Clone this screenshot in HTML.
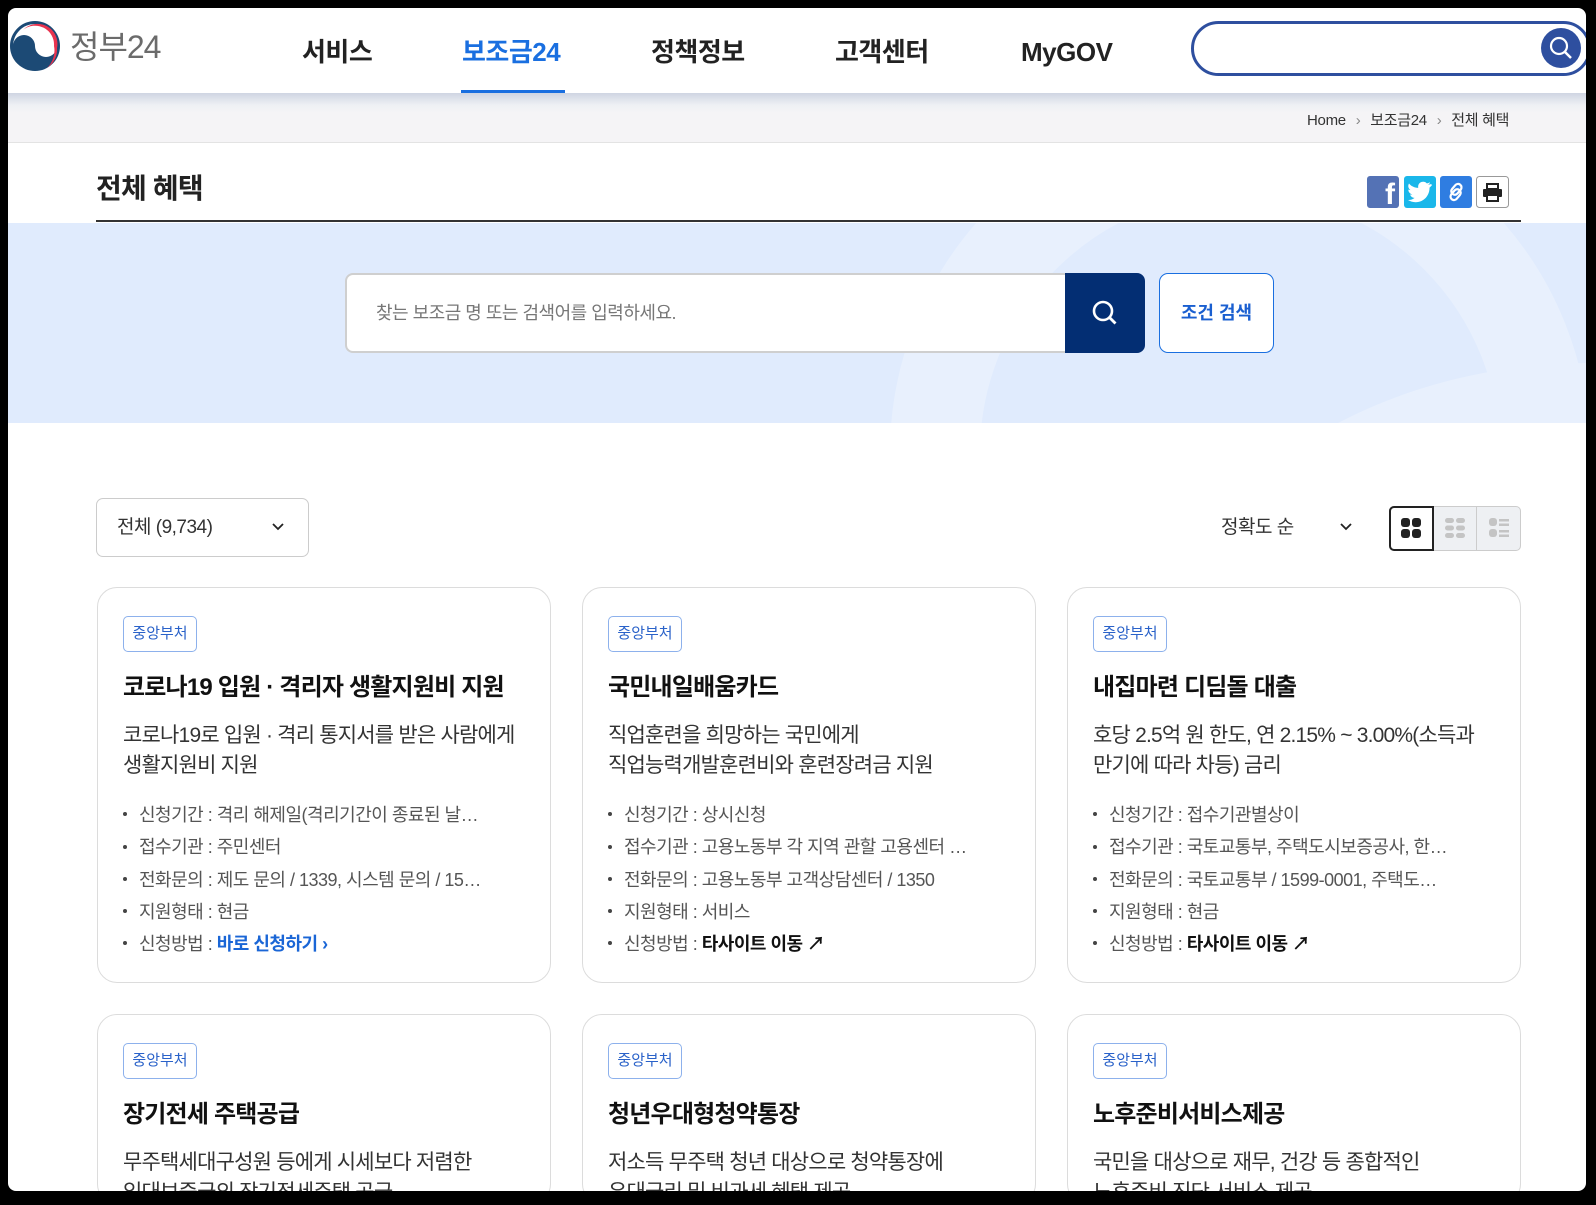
<!DOCTYPE html>
<html><head><meta charset="utf-8"><style>
*{margin:0;padding:0;box-sizing:border-box}
html,body{width:1596px;height:1205px;background:#000;overflow:hidden}
body{font-family:"Liberation Sans","Noto Sans CJK KR",sans-serif;position:relative}
#win{position:absolute;left:0;top:0;width:1596px;height:1205px;background:#fff;clip-path:inset(8px 10px 14px 8px round 8px);overflow:hidden}
.a{position:absolute;white-space:nowrap}
.nav{font-size:26px;font-weight:bold;color:#222;top:34px;line-height:36px;letter-spacing:-0.5px}
.card{position:absolute;width:454px;height:396px;border:1px solid #dcdcdc;border-radius:20px;background:#fff;overflow:hidden}
.tag{position:absolute;left:25px;top:28px;width:74px;height:36px;border:1px solid #8db1ec;border-radius:5px;color:#2a62c9;font-size:15px;line-height:34px;text-align:center}
.tt{position:absolute;left:25px;top:82px;font-size:24px;font-weight:bold;color:#111;line-height:36px;white-space:nowrap;letter-spacing:-0.8px}
.ds{position:absolute;left:25px;top:133px;font-size:21px;color:#333;line-height:30px;white-space:nowrap;letter-spacing:-0.8px}
.ul{position:absolute;left:25px;top:211px;list-style:none;font-size:18px;color:#555;line-height:32.3px;white-space:nowrap;letter-spacing:-0.5px}
.ul li:before{content:"";display:inline-block;width:4px;height:4px;background:#444;border-radius:50%;margin:0 12px 4px 0;vertical-align:middle}
.blk{color:#111;font-weight:bold}
.blu{color:#1a66d6;font-weight:bold}
</style></head><body><div id="win">
<svg class="a" style="left:9px;top:20px" width="52" height="52" viewBox="0 0 52 52">
<circle cx="26" cy="26" r="25" fill="#1c4a75"/>
<path d="M4 26 A22 22 0 0 1 48 26 A11 11 0 0 1 26 26 A11 11 0 0 0 4 26Z" fill="#fff"/>
<path d="M14 10 A20 20 0 0 1 48 28 A22 22 0 0 1 38 48 A24 24 0 0 0 45 26 A19 19 0 0 0 14 10Z" fill="#e8334f"/>
</svg>
<div class="a" style="left:70px;top:27px;font-size:32px;color:#6b6b6b;line-height:40px;letter-spacing:-1px">정부24</div>
<div class="a nav" style="left:302px">서비스</div>
<div class="a nav" style="left:462px;color:#1a6fe0">보조금24</div>
<div class="a" style="left:461px;top:90px;width:104px;height:6px;background:#1a6fe0"></div>
<div class="a nav" style="left:651px">정책정보</div>
<div class="a nav" style="left:835px">고객센터</div>
<div class="a nav" style="left:1021px">MyGOV</div>
<div class="a" style="left:1191px;top:21px;width:400px;height:55px;border:3px solid #2e4f9f;border-radius:28px"></div>
<svg class="a" style="left:1541px;top:28px" width="40" height="40"><circle cx="20" cy="20" r="20" fill="#2e4f9f"/><circle cx="18" cy="18" r="8" fill="none" stroke="#fff" stroke-width="2.2"/><path d="M24 24l6 6" stroke="#fff" stroke-width="2.5"/></svg>
<div class="a" style="left:0;top:93px;width:1596px;height:50px;background:linear-gradient(#cfd5e2,#eef0f4 12px,#f5f4f6 20px);border-bottom:1px solid #e3e3e3"></div>
<div class="a" style="left:1307px;top:111px;font-size:15px;color:#333;line-height:20px;letter-spacing:-0.3px">Home <span style="color:#888;margin:0 6px">›</span> 보조금24 <span style="color:#888;margin:0 6px">›</span> 전체 혜택</div>
<div class="a" style="left:96px;top:170px;font-size:28px;font-weight:bold;color:#222;line-height:38px;letter-spacing:-0.8px">전체 혜택</div>
<div class="a" style="left:96px;top:220px;width:1425px;height:2px;background:#333"></div>
<div class="a" style="left:1367px;top:176px;width:32px;height:32px;background:#5472b5;border-radius:3px;color:#fff;font-weight:bold;font-size:30px;line-height:38px;text-align:right;padding-right:4px;overflow:hidden">f</div>
<svg class="a" style="left:1404px;top:176px" width="32" height="32"><rect width="32" height="32" rx="3" fill="#1ab7ea"/><path d="M26 10c-1 .5-2 .7-3 .8 1-.6 1.800-1.500 2-2.600-1 .6-2 1-3.200 1.200a5 5 0 0 0-8.600 4.500C9.200 13.700 6 12 4 9.500c-1.500 2.500-.5 5.200 1.500 6.600-.8 0-1.600-.3-2.200-.6 0 2.400 1.700 4.400 4 4.900-.7.200-1.500.2-2.200.1.600 2 2.500 3.400 4.600 3.400A10 10 0 0 1 3 26c2.200 1.400 4.800 2.200 7.500 2.200 9 0 14-7.500 14-14v-.6c1-.7 1.800-1.600 2.500-2.600z" fill="#fff" transform="translate(1 -2)"/></svg>
<svg class="a" style="left:1440px;top:176px" width="32" height="32"><rect width="32" height="32" rx="3" fill="#2f7de1"/><g fill="none" stroke="#fff" stroke-width="2.2"><rect x="13" y="7" width="7" height="12" rx="3.5" transform="rotate(40 16 13)"/><rect x="12" y="13" width="7" height="12" rx="3.5" transform="rotate(40 16 19)"/></g></svg>
<svg class="a" style="left:1476px;top:176px" width="33" height="32"><rect x=".5" y=".5" width="32" height="31" rx="3" fill="#fff" stroke="#999"/><rect x="11" y="8" width="11" height="5" fill="none" stroke="#222" stroke-width="2"/><rect x="7" y="13" width="19" height="8" rx="1" fill="#222"/><rect x="11" y="19" width="11" height="6" fill="#fff" stroke="#222" stroke-width="2"/></svg>
<div class="a" style="left:0;top:223px;width:1596px;height:200px;background:#e0ebfd;overflow:hidden">
<div class="a" style="left:890px;top:-120px;width:700px;height:700px;border-radius:50%;border:90px solid #e8f0fd"></div>
<div class="a" style="left:1140px;top:140px;width:900px;height:700px;border-radius:50%;border:80px solid #e8f0fd"></div>
</div>
<div class="a" style="left:345px;top:273px;width:722px;height:80px;background:#fff;border:2px solid #cfcfcf;border-right:none;border-radius:8px 0 0 8px"></div>
<div class="a" style="left:376px;top:301px;font-size:18px;color:#777;line-height:24px;letter-spacing:-0.5px">찾는 보조금 명 또는 검색어를 입력하세요.</div>
<div class="a" style="left:1065px;top:273px;width:80px;height:80px;background:#032e73;border-radius:0 8px 8px 0"></div>
<svg class="a" style="left:1090px;top:298px" width="30" height="30"><circle cx="13" cy="13" r="9" fill="none" stroke="#fff" stroke-width="2.6"/><path d="M19.500 19.500l6 6" stroke="#fff" stroke-width="2.8"/></svg>
<div class="a" style="left:1159px;top:273px;width:115px;height:80px;background:#fff;border:1px solid #1a6fe0;border-radius:9px;color:#1a5fd0;font-weight:bold;font-size:18px;line-height:78px;text-align:center">조건 검색</div>
<div class="a" style="left:96px;top:498px;width:213px;height:59px;border:1px solid #ccc;border-radius:7px"></div>
<div class="a" style="left:117px;top:516px;font-size:19px;color:#333;line-height:24px;letter-spacing:-0.5px">전체 (9,734)</div>
<svg class="a" style="left:271px;top:522px" width="14" height="10"><path d="M2 2l5 5 5-5" fill="none" stroke="#222" stroke-width="1.8"/></svg>
<div class="a" style="left:1221px;top:516px;font-size:19px;color:#333;line-height:24px;letter-spacing:-0.5px">정확도 순</div>
<svg class="a" style="left:1339px;top:522px" width="14" height="10"><path d="M2 2l5 5 5-5" fill="none" stroke="#222" stroke-width="1.8"/></svg>
<div class="a" style="left:1389px;top:506px;width:132px;height:45px;background:#eef0f3;border:1px solid #ccc;border-radius:5px"></div>
<div class="a" style="left:1432px;top:507px;width:1px;height:43px;background:#ccc"></div>
<div class="a" style="left:1476px;top:507px;width:1px;height:43px;background:#ccc"></div>
<div class="a" style="left:1389px;top:506px;width:45px;height:45px;background:#fff;border:2px solid #222;border-radius:5px 0 0 5px"></div>
<svg class="a" style="left:1400px;top:517px" width="24" height="24"><g fill="#222"><rect x="1" y="1" width="9" height="9" rx="3"/><rect x="12" y="1" width="9" height="9" rx="3"/><rect x="1" y="12" width="9" height="9" rx="3"/><rect x="12" y="12" width="9" height="9" rx="3"/></g></svg>
<svg class="a" style="left:1444px;top:517px" width="24" height="24"><g fill="#c4c4c4"><rect x="1" y="1" width="9" height="5" rx="2.5"/><rect x="12" y="1" width="9" height="5" rx="2.5"/><rect x="1" y="8.500" width="9" height="5" rx="2.5"/><rect x="12" y="8.500" width="9" height="5" rx="2.5"/><rect x="1" y="16" width="9" height="5" rx="2.5"/><rect x="12" y="16" width="9" height="5" rx="2.5"/></g></svg>
<svg class="a" style="left:1488px;top:517px" width="24" height="24"><g fill="#c4c4c4"><rect x="1" y="1" width="8" height="8" rx="3"/><rect x="1" y="12" width="8" height="8" rx="3"/><rect x="11" y="2" width="10" height="2.500"/><rect x="11" y="6.500" width="10" height="2.500"/><rect x="11" y="13" width="10" height="2.500"/><rect x="11" y="17.500" width="10" height="2.500"/></g></svg>
<div class="card" style="left:97px;top:587px"><div class="tag">중앙부처</div><div class="tt">코로나19 입원 · 격리자 생활지원비 지원</div><div class="ds">코로나19로 입원 · 격리 통지서를 받은 사람에게<br>생활지원비 지원</div>
<ul class="ul"><li>신청기간 : 격리 해제일(격리기간이 종료된 날…</li><li>접수기관 : 주민센터</li><li>전화문의 : 제도 문의 / 1339, 시스템 문의 / 15…</li><li>지원형태 : 현금</li><li>신청방법 : <span class="blu">바로 신청하기 ›</span></li></ul></div>
<div class="card" style="left:582px;top:587px"><div class="tag">중앙부처</div><div class="tt">국민내일배움카드</div><div class="ds">직업훈련을 희망하는 국민에게<br>직업능력개발훈련비와 훈련장려금 지원</div>
<ul class="ul"><li>신청기간 : 상시신청</li><li>접수기관 : 고용노동부 각 지역 관할 고용센터 …</li><li>전화문의 : 고용노동부 고객상담센터 / 1350</li><li>지원형태 : 서비스</li><li>신청방법 : <span class="blk">타사이트 이동 ↗</span></li></ul></div>
<div class="card" style="left:1067px;top:587px"><div class="tag">중앙부처</div><div class="tt">내집마련 디딤돌 대출</div><div class="ds">호당 2.5억 원 한도, 연 2.15% ~ 3.00%(소득과<br>만기에 따라 차등) 금리</div>
<ul class="ul"><li>신청기간 : 접수기관별상이</li><li>접수기관 : 국토교통부, 주택도시보증공사, 한…</li><li>전화문의 : 국토교통부 / 1599-0001, 주택도…</li><li>지원형태 : 현금</li><li>신청방법 : <span class="blk">타사이트 이동 ↗</span></li></ul></div>
<div class="card" style="left:97px;top:1014px;height:190px"><div class="tag">중앙부처</div><div class="tt">장기전세 주택공급</div><div class="ds">무주택세대구성원 등에게 시세보다 저렴한<br>임대보증금의 장기전세주택 공급</div></div>
<div class="card" style="left:582px;top:1014px;height:190px"><div class="tag">중앙부처</div><div class="tt">청년우대형청약통장</div><div class="ds">저소득 무주택 청년 대상으로 청약통장에<br>우대금리 및 비과세 혜택 제공</div></div>
<div class="card" style="left:1067px;top:1014px;height:190px"><div class="tag">중앙부처</div><div class="tt">노후준비서비스제공</div><div class="ds">국민을 대상으로 재무, 건강 등 종합적인<br>노후준비 진단 서비스 제공</div></div>
</div></body></html>
